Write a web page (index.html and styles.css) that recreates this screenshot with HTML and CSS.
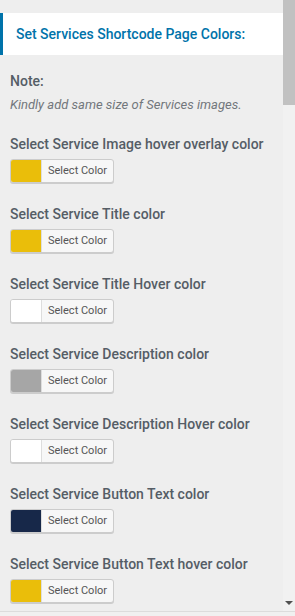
FILE: index.html
```html
<!DOCTYPE html>
<html>
<head>
<meta charset="utf-8">
<link rel="stylesheet" href="styles.css">
</head>
<body>
<div class="frame">
  <div class="panel">
    <div class="section-title">Set Services Shortcode Page Colors:</div>
    <div class="note">
      <div class="note-label">Note:</div>
      <div class="note-text">Kindly add same size of Services images.</div>
    </div>
    <div class="control">
      <div class="label">Select Service Image hover overlay color</div>
      <button class="picker"><span class="swatch sw-yellow"></span><span class="picker-text">Select Color</span></button>
    </div>
    <div class="control">
      <div class="label">Select Service Title color</div>
      <button class="picker"><span class="swatch sw-yellow"></span><span class="picker-text">Select Color</span></button>
    </div>
    <div class="control">
      <div class="label">Select Service Title Hover color</div>
      <button class="picker"><span class="swatch sw-white"></span><span class="picker-text">Select Color</span></button>
    </div>
    <div class="control">
      <div class="label">Select Service Description color</div>
      <button class="picker"><span class="swatch sw-gray"></span><span class="picker-text">Select Color</span></button>
    </div>
    <div class="control">
      <div class="label">Select Service Description Hover color</div>
      <button class="picker"><span class="swatch sw-white"></span><span class="picker-text">Select Color</span></button>
    </div>
    <div class="control">
      <div class="label">Select Service Button Text color</div>
      <button class="picker"><span class="swatch sw-navy"></span><span class="picker-text">Select Color</span></button>
    </div>
    <div class="control">
      <div class="label">Select Service Button Text hover color</div>
      <button class="picker"><span class="swatch sw-yellow"></span><span class="picker-text">Select Color</span></button>
    </div>
  </div>
  <div class="scrollbar">
    <div class="thumb"></div>
    <div class="track"></div>
    <div class="arrow"></div>
  </div>
</div>
<div class="bottom-edge"></div>
</body>
</html>
```
FILE: styles.css
```css
html, body {
  margin: 0;
  padding: 0;
  background: #eeeeee;
  font-family: Roboto, "Noto Sans", sans-serif;
}
.frame {
  display: flex;
  height: 611px;
  overflow: hidden;
}
.panel {
  flex: 1;
  padding-top: 13px;
  overflow: hidden;
}
.section-title {
  background: #ffffff;
  border-left: 3px solid #0073aa;
  color: #0073aa;
  font-size: 14px;
  font-weight: 500;
  height: 42px;
  line-height: 42px;
  padding-left: 13px;
}
.note {
  padding: 16px 10px 9px;
}
.note-label {
  color: #555d66;
  font-size: 14px;
  font-weight: 500;
  line-height: 20px;
}
.note-text {
  color: #72777c;
  font-size: 13px;
  font-style: italic;
  line-height: 20px;
  margin-top: 4px;
}
.control {
  padding: 0 10px;
  margin-top: 10px;
  height: 60px;
}
.label {
  color: #555d66;
  font-size: 14px;
  font-weight: 500;
  line-height: 20px;
}
.picker {
  display: flex;
  align-items: stretch;
  margin-top: 5px;
  height: 24px;
  padding: 0;
  border: 1px solid #cccccc;
  border-radius: 3px;
  background: #f7f7f7;
  box-shadow: 0 1px 0 #cccccc;
  overflow: hidden;
  font-family: Roboto, "Noto Sans", sans-serif;
  cursor: pointer;
}
.swatch {
  width: 30px;
  border-right: 1px solid #dddddd;
}
.sw-yellow { background: #eabe0a; }
.sw-white { background: #ffffff; }
.sw-gray { background: #a6a6a6; }
.sw-navy { background: #172849; }
.picker-text {
  color: #555555;
  font-size: 11px;
  line-height: 22px;
  padding: 0 6px 0 6px;
}
.scrollbar {
  width: 12px;
  display: flex;
  flex-direction: column;
  background: #f1f1f1;
}
.thumb {
  height: 105px;
  background: #c1c1c1;
}
.track {
  flex: 1;
}
.arrow {
  height: 0;
  width: 0;
  align-self: center;
  border-left: 4px solid transparent;
  border-right: 4px solid transparent;
  border-top: 4px solid #505050;
  margin-bottom: 6px;
}
.bottom-edge {
  height: 5px;
  border-top: 1px solid #dcdcdc;
  background: #f0f0f0;
}
```
